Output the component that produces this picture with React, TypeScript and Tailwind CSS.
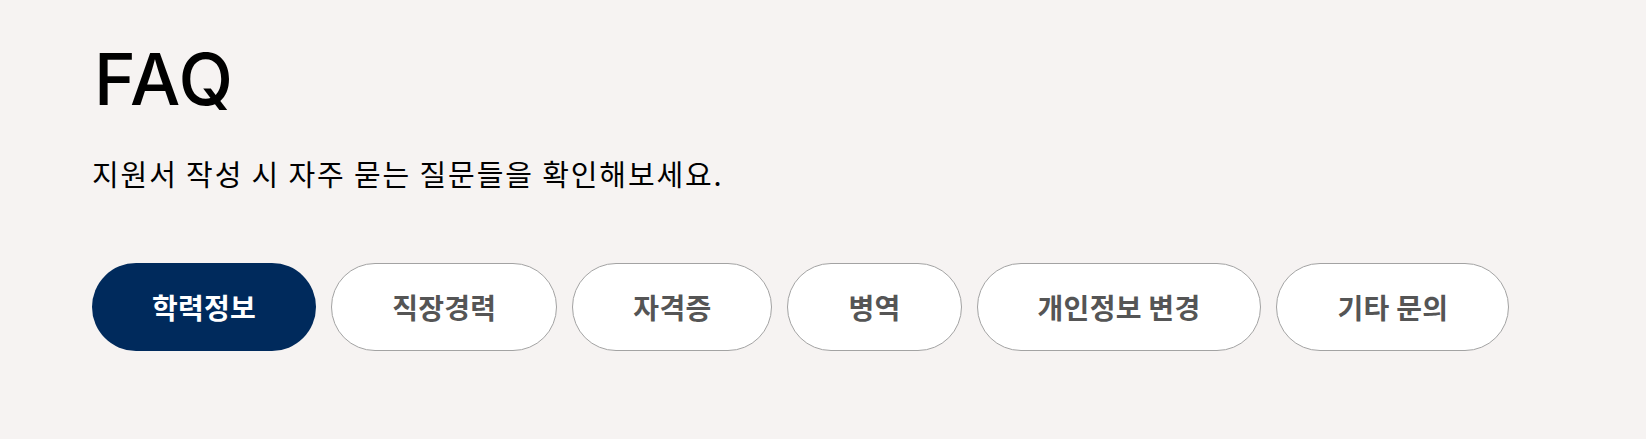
import React, { useState } from 'react';

const categories = ['학력정보', '직장경력', '자격증', '병역', '개인정보 변경', '기타 문의'];

export default function App() {
  const [active, setActive] = useState(0);

  return (
    <div className="min-h-screen w-full bg-[#f6f3f2] pl-[92px] pt-[32px] font-['Noto_Sans_CJK_KR',sans-serif]">
      <h1 className="ml-[2px] pt-[12px] font-['Inter','Noto_Sans_CJK_KR',sans-serif] text-[71px] font-medium leading-none tracking-[0.01em] text-black">
        FAQ
      </h1>
      <p className="mt-[44px] text-[29px] leading-none tracking-[0.065em] text-black">
        지원서 작성 시 자주 묻는 질문들을 확인해보세요.
      </p>
      <div className="mt-[75px] flex gap-[15px]">
        {categories.map((label, idx) => (
          <button
            key={label}
            onClick={() => setActive(idx)}
            className={
              idx === active
                ? 'h-[88px] rounded-full bg-[#002a5c] px-[60px] text-[28px] font-bold tracking-[0.01em] text-white'
                : 'h-[88px] rounded-full border border-[#a3a3a3] bg-white px-[60px] text-[28px] font-bold tracking-[0.01em] text-[#555555]'
            }
          >
            {label}
          </button>
        ))}
      </div>
    </div>
  );
}
